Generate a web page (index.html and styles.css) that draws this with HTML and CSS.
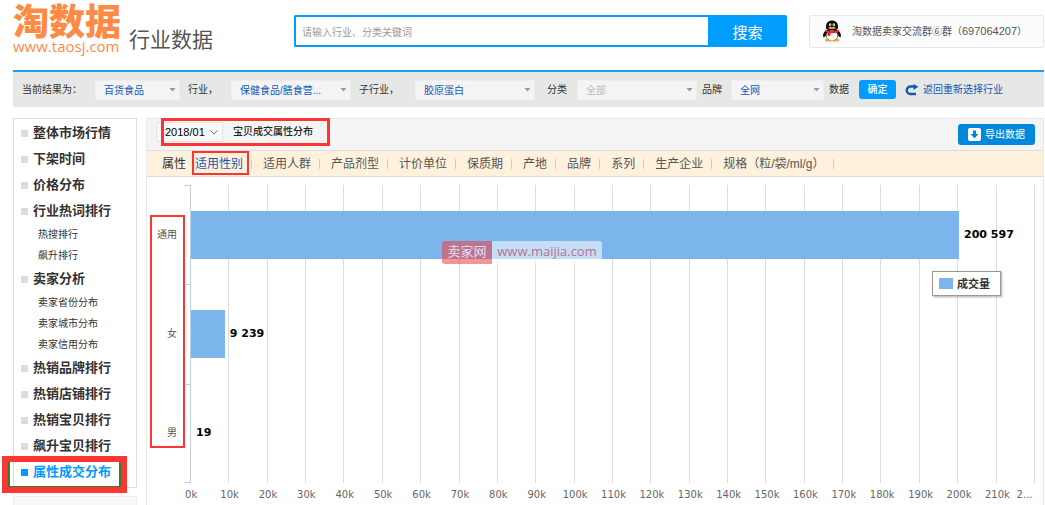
FILE: index.html
```html
<!DOCTYPE html>
<html lang="zh-CN">
<head>
<meta charset="utf-8">
<title>淘数据 行业数据</title>
<link rel="stylesheet" href="styles.css">
</head>
<body>
<header class="header">
  <a class="logo" href="#"><span class="logo-name">淘数据</span><span class="logo-url">www.taosj.com</span></a>
  <h1 class="site-title">行业数据</h1>
  <form class="search">
    <input class="search-input" type="text" aria-label="搜索" placeholder="请输入行业、分类关键词">
    <button class="search-button" type="button">搜索</button>
  </form>
  <a class="qq" href="#">
    <svg class="qq-icon" viewBox="0 0 20 22" aria-hidden="true">
      <path d="M4 10C1.500 12 .5 15 1.300 17c.6.8 1.700-.3 2.300-1.500L16.400 15.500c.6 1.200 1.700 2.300 2.300 1.500.8-2-.2-5-2.700-7z" fill="#111"/>
      <ellipse cx="6.500" cy="20" rx="3.700" ry="1.600" fill="#f5a623"/><ellipse cx="13.500" cy="20" rx="3.700" ry="1.600" fill="#f5a623"/>
      <ellipse cx="10" cy="14" rx="6.800" ry="6.300" fill="#111"/>
      <path d="M4 9V6.500C4 2.800 6.500.5 10 .5s6 2.300 6 6V9z" fill="#111"/>
      <ellipse cx="10" cy="15.500" rx="5.600" ry="5" fill="#fff"/>
      <ellipse cx="8.200" cy="4.800" rx="1.200" ry="1.600" fill="#fff"/><ellipse cx="11.800" cy="4.800" rx="1.200" ry="1.600" fill="#fff"/>
      <circle cx="8.600" cy="5" r=".6"/><circle cx="11.400" cy="5" r=".6"/>
      <ellipse cx="10" cy="8" rx="3.600" ry="1" fill="#f5a623"/>
      <path d="M3.500 9.500c4 2 9 2 13 0l.6 2.500c-3 1.200-6 1.500-8.600 1.300V16L5.500 15.700V12.600L3 12z" fill="#e6262b"/>
    </svg>
    <span>淘数据卖家交流群⑥群（<span class="digits">697064207</span>）</span>
  </a>
</header>

<form class="filters">
  <span>当前结果为：</span>
  <span class="pick"><select id="industry"><option>百货食品</option></select></span>
  <label class="lead" for="industry">行业，</label>
  <span class="pick"><select id="sub"><option>保健食品/膳食营...</option></select></span>
  <label class="lead" for="sub">子行业，</label>
  <span class="pick"><select id="kind"><option>胶原蛋白</option></select></span>
  <label class="lead lead-wide" for="kind">分类</label>
  <span class="pick pick-muted"><select id="brand"><option>全部</option></select></span>
  <label class="lead lead-tight" for="brand">品牌</label>
  <span class="pick"><select id="source"><option>全网</option></select></span>
  <label class="lead lead-tight" for="source">数据</label>
  <button class="confirm" type="button">确定</button>
  <a class="back" href="#">
    <svg class="back-icon" viewBox="0 0 14 12" aria-hidden="true"><path d="M9 2.500H5.500a3.600 3.600 0 0 0 0 7.500H11" fill="none" stroke="#1058b8" stroke-width="2.400"/><path d="M8.500 0 13.500 2.700 8.500 6z" fill="#1058b8"/></svg>
    返回重新选择行业
  </a>
</form>

<div class="columns">
  <aside class="side">
    <ul class="menu">
      <li><a class="item" href="#">整体市场行情</a></li>
      <li><a class="item" href="#">下架时间</a></li>
      <li><a class="item" href="#">价格分布</a></li>
      <li><a class="item" href="#">行业热词排行</a></li>
      <li><a class="subitem" href="#">热搜排行</a></li>
      <li><a class="subitem" href="#">飙升排行</a></li>
      <li><a class="item" href="#">卖家分析</a></li>
      <li><a class="subitem" href="#">卖家省份分布</a></li>
      <li><a class="subitem" href="#">卖家城市分布</a></li>
      <li><a class="subitem" href="#">卖家信用分布</a></li>
      <li><a class="item" href="#">热销品牌排行</a></li>
      <li><a class="item" href="#">热销店铺排行</a></li>
      <li><a class="item" href="#">热销宝贝排行</a></li>
      <li><a class="item" href="#">飙升宝贝排行</a></li>
      <li><a class="item item-active" href="#">属性成交分布</a></li>
    </ul>
    <div class="side-next"></div>
  </aside>

  <main class="panel">
    <div class="panel-head">
      <div class="period">
        <span class="month"><select aria-label="月份"><option>2018/01</option></select>
          <svg class="chevron" viewBox="0 0 8 5" aria-hidden="true"><path d="M.5.5 4 4 7.500.5" fill="none" stroke="#777"/></svg></span>
        <h2 class="panel-title">宝贝成交属性分布</h2>
      </div>
      <button class="export" type="button">
        <svg class="export-icon" viewBox="0 0 13 13" aria-hidden="true"><rect width="13" height="13" rx="2" fill="#fff"/><path d="M5 2.500h3V6h2.500l-4 4.500L2.500 6H5z" fill="#0088dc"/></svg>
        导出数据
      </button>
    </div>
    <nav class="tabs">
      <span class="tabs-label">属性</span>
      <a class="tab tab-active" href="#">适用性别</a>
      <a class="tab" href="#">适用人群</a>
      <a class="tab" href="#">产品剂型</a>
      <a class="tab" href="#">计价单位</a>
      <a class="tab" href="#">保质期</a>
      <a class="tab" href="#">产地</a>
      <a class="tab" href="#">品牌</a>
      <a class="tab" href="#">系列</a>
      <a class="tab" href="#">生产企业</a>
      <a class="tab" href="#">规格（粒/袋/ml/g）</a>
    </nav>
    <section class="chart">
      <div class="categories"><span>通用</span><span>女</span><span>男</span></div>
      <div class="plot">
        <div class="gridlines"><i></i><i></i><i></i><i></i><i></i><i></i><i></i><i></i><i></i><i></i><i></i><i></i><i></i><i></i><i></i><i></i><i></i><i></i><i></i><i></i><i></i><i></i></div>
        <div class="bars">
          <div class="band"><div class="bar" style="width:91%"></div><b>200 597</b></div>
          <div class="band"><div class="bar" style="width:4%"></div><b>9 239</b></div>
          <div class="band"><div class="bar" style="width:0%"></div><b>19</b></div>
        </div>
        <div class="legend"><i class="swatch"></i>成交量</div>
        <div class="watermark"><span class="mark-name">卖家网</span><span class="mark-url">www.maijia.com</span></div>
      </div>
      <div class="axis"><span>0k</span><span>10k</span><span>20k</span><span>30k</span><span>40k</span><span>50k</span><span>60k</span><span>70k</span><span>80k</span><span>90k</span><span>100k</span><span>110k</span><span>120k</span><span>130k</span><span>140k</span><span>150k</span><span>160k</span><span>170k</span><span>180k</span><span>190k</span><span>200k</span><span>210k</span><span>2...</span></div>
    </section>
  </main>
</div>
</body>
</html>
```
FILE: styles.css
```css
*, *::before, *::after { box-sizing: border-box; }
body {
  margin: 0;
  padding: 0 1px 0 13px;
  background: #fff;
  color: #333;
  font: 10px/20px "Liberation Sans", "Noto Sans CJK SC", sans-serif;
}
a { color: inherit; text-decoration: none; }
button, input, select { font: inherit; margin: 0; border: 0; }
h1, h2, ul { margin: 0; padding: 0; }

.header { display: flex; align-items: center; height: 70px; padding-bottom: 8px; }
.logo { display: flex; flex-direction: column; width: 109px; color: #ff8a45; white-space: nowrap; }
.logo-name { font-size: 36px; font-weight: 900; line-height: 30px; }
.logo-url { font: 15px/16px "Open Sans", sans-serif; }
.site-title { width: 165px; margin-left: 7px; padding-top: 17px; font-size: 21px; font-weight: 400; line-height: 28px; color: #555; }
.search { flex: 1; display: flex; height: 32px; }
.search-input { flex: 1; min-width: 0; padding: 4px 7px 0 6px; border: 2px solid #009dff; border-right: 0; border-radius: 2px 0 0 2px; }
.search-input::placeholder { color: #999; }
.search-button { width: 79px; padding-top: 4px; background: #009dff; color: #fff; font-size: 15px; border-radius: 0 2px 2px 0; }
.qq { display: flex; align-items: center; gap: 10px; width: 235px; height: 33px; margin-left: 22px; padding-left: 12px; border: 1px solid #e8e8e8; border-radius: 2px; background: #fcfcfc; color: #555; white-space: nowrap; }
.qq-icon { width: 20px; height: 22px; }
.digits { font-size: 11px; }

.filters {
  display: grid;
  grid-template-columns: 73px 85fr 51px 120fr 64px 120fr 42px 120fr 34px 93fr 35px 37px 148px;
  align-items: center;
  height: 37px;
  padding-left: 9px;
  border-top: 2px solid #1aa0f5;
  background: #e6e8e5;
  white-space: nowrap;
}
.lead { padding-left: 8px; }
.lead-wide { padding-left: 12px; }
.lead-tight { padding-left: 5px; }
.pick { position: relative; display: flex; height: 20px; background: #f4f4f4; border: 1px solid #eee; color: #1058b8; }
.pick select { appearance: none; width: 100%; min-width: 0; padding: 0 12px 0 8px; background: none; color: inherit; }
.pick::after { content: ""; position: absolute; right: 3px; top: 7px; width: 7px; height: 4px; background: #999; clip-path: polygon(0 0, 100% 0, 50% 100%); pointer-events: none; }
.pick-muted { color: #bbb; }
.confirm { height: 19px; padding: 0; border-radius: 3px; background: #009dff; color: #fff; font-weight: 500; }
.back { display: flex; align-items: center; gap: 4px; padding-left: 9px; color: #1058b8; }
.back-icon { width: 14px; height: 12px; }

.columns { display: flex; gap: 9px; padding-top: 11px; }
.side { width: 124px; }
.menu { padding: 1px 0 2px; border: 1px solid #ddd; list-style: none; }
.item { position: relative; display: flex; align-items: center; gap: 5px; height: 26px; padding-left: 7px; font-size: 13px; font-weight: 700; }
.item::before { content: ""; width: 7px; height: 7px; background: #dcdcdc; }
.subitem { display: block; height: 21px; padding-left: 24px; line-height: 21px; }
.item-active { color: #009dff; }
.item-active::before { background: #009dff; }
.item-active::after { content: ""; position: absolute; left: -12px; top: -3px; width: 125px; height: 37px; border: 6px solid #fb3434; box-shadow: inset 2px -1px #2c842f, inset -2px 0 #2c842f; }
.side-next { height: 9px; margin-top: 8px; border: 1px solid #eee; border-bottom: 0; background: #f7f7f7; }

.panel { flex: 1; min-width: 0; border: 1px solid #e8e8e8; border-bottom: 0; }
.panel-head { display: flex; align-items: center; justify-content: space-between; height: 31px; padding: 0 8px 0 9px; background: #f4f4f4; }
.period { position: relative; display: flex; align-items: center; gap: 10px; height: 28px; padding-bottom: 5px; }
.period::after { content: ""; position: absolute; left: 5px; top: -3px; width: 169px; height: 28px; border: 3px solid #fb3434; pointer-events: none; }
.month { display: flex; align-items: center; width: 67px; height: 20px; border: 1px solid #e4e4e4; background: #f8f8f8; }
.month select { appearance: none; width: 53px; padding: 0 0 0 8px; background: none; font-size: 11px; }
.chevron { width: 8px; height: 5px; }
.panel-title { font-size: 10px; font-weight: 500; color: #222; }
.export { display: flex; align-items: center; justify-content: center; gap: 4px; width: 77px; height: 21px; padding: 0; border-radius: 3px; background: #0088dc; color: #fff; }
.export-icon { width: 13px; height: 13px; }
.tabs { display: flex; align-items: center; height: 27px; padding-left: 15px; border: 1px solid #ddd; border-width: 1px 0; background: #fff1dc; font-size: 12px; color: #555; white-space: nowrap; }
.tabs-label { color: #333; }
.tab { position: relative; display: flex; align-items: center; height: 10px; padding: 0 8px 0 11px; border-right: 1px solid #ccc; }
.tab-active { padding-left: 9px; color: #1058b8; }
.tab-active::after { content: ""; position: absolute; left: 6px; top: -8px; width: 57px; height: 24px; border: 2px solid #fb3434; }

.chart { display: grid; grid-template-columns: 43px 1fr; padding: 8px 8px 0 0; overflow: hidden; }
.categories { position: relative; display: grid; grid-template-rows: 1fr 1fr 1fr; height: 298px; color: #555; }
.categories span { display: flex; align-items: center; justify-content: flex-end; padding-right: 13px; background: linear-gradient(#c0d0e0, #c0d0e0) right top / 6px 1px no-repeat; }
.categories span:last-child { background: linear-gradient(#c0d0e0, #c0d0e0) right top / 6px 1px no-repeat, linear-gradient(#c0d0e0, #c0d0e0) right bottom / 6px 1px no-repeat; }
.categories::after { content: ""; position: absolute; left: 3px; top: 30px; bottom: 35px; width: 35px; border: 2px solid #fb3434; }
.plot { position: relative; display: grid; border-left: 1px solid #c0d0e0; }
.gridlines, .bars { grid-area: 1 / 1; min-width: 0; }
.gridlines { display: flex; }
.gridlines i { flex: 1; border-right: 1px solid #dcdcdc; }
.bars { display: grid; grid-template-rows: 1fr 1fr 1fr; }
.band { display: flex; align-items: center; gap: 5px; min-width: 0; white-space: nowrap; }
.bar { flex: none; height: 48px; background: #7cb5ec; }
.band b { color: #000; font: bold 11px/16px "DejaVu Sans", sans-serif; }
.legend { position: absolute; right: 34px; top: 86px; display: flex; align-items: center; gap: 4px; width: 69px; height: 25px; padding-left: 6px; border: 1px solid #999; background: #fff; box-shadow: 1px 1px 2px #aaa; font-size: 11px; font-weight: 700; }
.swatch { width: 14px; height: 11px; background: #7cb5ec; }
.watermark { position: absolute; left: 251px; top: 56px; display: flex; height: 23px; line-height: 22px; border-radius: 3px; overflow: hidden; }
.mark-name { width: 50px; background: rgba(239, 62, 62, .55); color: #e4dff0; font-size: 13px; text-align: center; }
.mark-url { width: 110px; background: rgba(255, 255, 255, .55); color: #b9708f; font: 13px/21px "Open Sans", sans-serif; text-align: center; }
.axis { grid-column: 2; display: flex; margin: 2px -20px 0 -18px; font: 10px/20px "DejaVu Sans", sans-serif; color: #666; }
.axis span { flex: 1 1 0; min-width: 0; text-align: center; }
.axis span:last-child { text-align: left; }
```
